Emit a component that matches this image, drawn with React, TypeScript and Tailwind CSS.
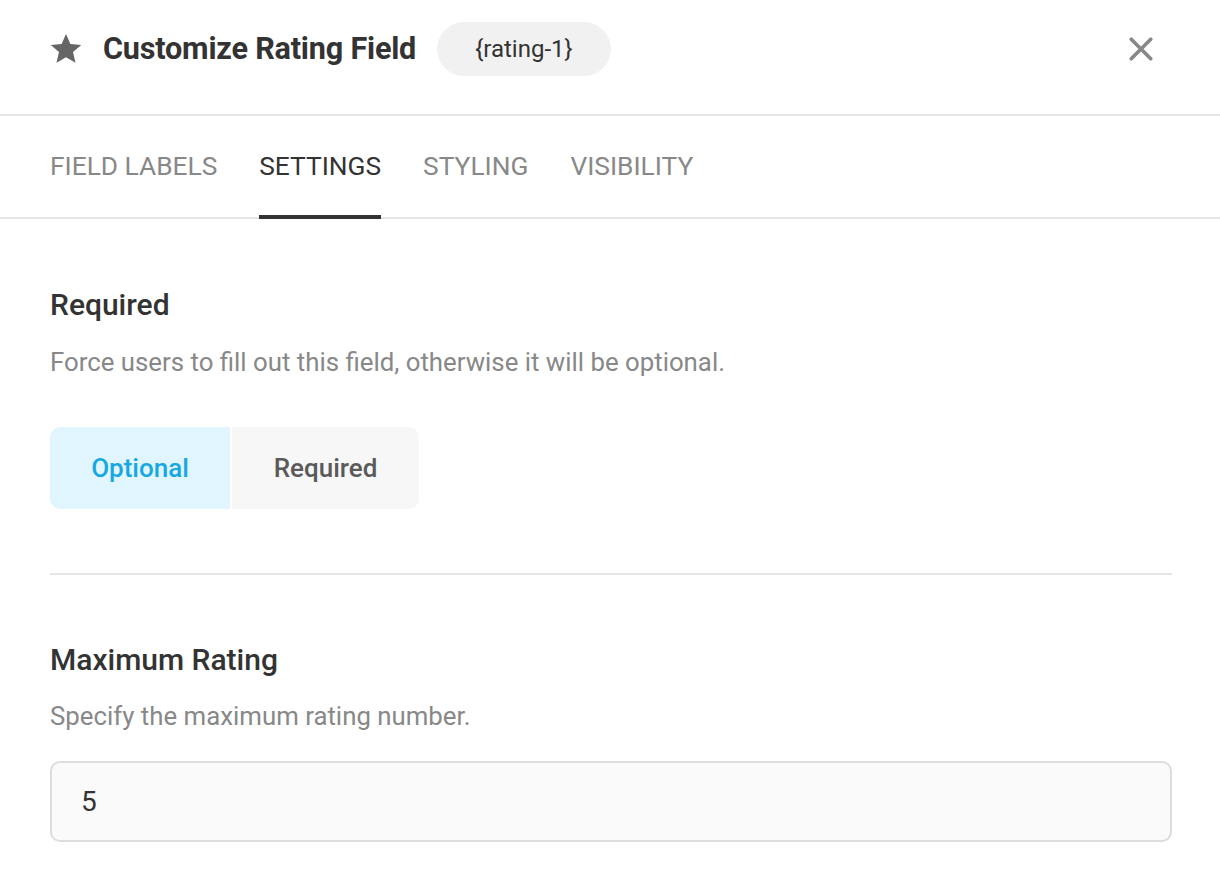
export default function App() {
  const tabs = ["FIELD LABELS", "SETTINGS", "STYLING", "VISIBILITY"];
  return (
    <div className="w-[1220px] h-[879px] bg-white overflow-hidden font-['Roboto',sans-serif]">
      <div className="h-[116px] flex items-center pl-[50px] pr-[66px] pb-[16px] border-b-2 border-[#e6e6e6]">
        <svg width="34" height="33" viewBox="0 0 24 24" className="ml-[-1px] mt-[-2px]">
          <path
            fill="#666666"
            d="M12 1.4l3.2 7.3 7.9.7-6 5.2 1.8 7.8L12 18.4l-6.9 4 1.8-7.8-6-5.2 7.9-.7z"
          />
        </svg>
        <h1 className="ml-[20px] text-[30.6px] font-bold text-[#333333] tracking-[-0.2px]">
          Customize Rating Field
        </h1>
        <span className="ml-[21px] h-[54px] px-[38px] rounded-full bg-[#f1f1f1] flex items-center text-[24px] text-[#333333]">
          {"{rating-1}"}
        </span>
        <button className="ml-auto text-[#888888]">
          <svg width="26" height="26" viewBox="0 0 24 24">
            <path d="M3 3L21 21M21 3L3 21" stroke="currentColor" strokeWidth="3.4" strokeLinecap="round" />
          </svg>
        </button>
      </div>

      <div className="h-[103px] flex items-stretch gap-[42px] px-[50px] border-b-2 border-[#e6e6e6]">
        {tabs.map((t) => (
          <div
            key={t}
            className={
              t === "SETTINGS"
                ? "flex items-center pt-[2px] text-[26.3px] text-[#333333] border-b-4 border-[#333333] mb-[-2px]"
                : "flex items-center pt-[2px] text-[26.3px] text-[#888888] border-b-4 border-transparent mb-[-2px]"
            }
          >
            {t}
          </div>
        ))}
      </div>

      <div className="pl-[50px] pr-[48px]">
        <div className="pt-[68px] pb-[64px] border-b-2 border-[#e6e6e6]">
          <h2 className="text-[30px] font-medium text-[#333333] leading-[36px]">Required</h2>
          <p className="mt-[24px] text-[25.8px] text-[#888888] leading-[30px]">
            Force users to fill out this field, otherwise it will be optional.
          </p>
          <div className="mt-[50px] flex gap-[2px]">
            <button className="w-[180px] h-[82px] rounded-l-[10px] bg-[#e1f5fe] text-[#17a8e3] text-[26px] font-medium">
              Optional
            </button>
            <button className="w-[187px] h-[82px] rounded-r-[10px] bg-[#f7f7f7] text-[#5a5a5a] text-[26px] font-medium">
              Required
            </button>
          </div>
        </div>

        <div className="pt-[67px]">
          <h2 className="text-[30px] font-medium text-[#333333] leading-[36px]">Maximum Rating</h2>
          <p className="mt-[23px] text-[25.8px] text-[#888888] leading-[30px]">
            Specify the maximum rating number.
          </p>
          <div className="mt-[30px] h-[81px] rounded-[10px] border-2 border-[#dddddd] bg-[#fafafa] flex items-center px-[29px] text-[28px] text-[#333333]">
            5
          </div>
        </div>
      </div>
    </div>
  );
}
